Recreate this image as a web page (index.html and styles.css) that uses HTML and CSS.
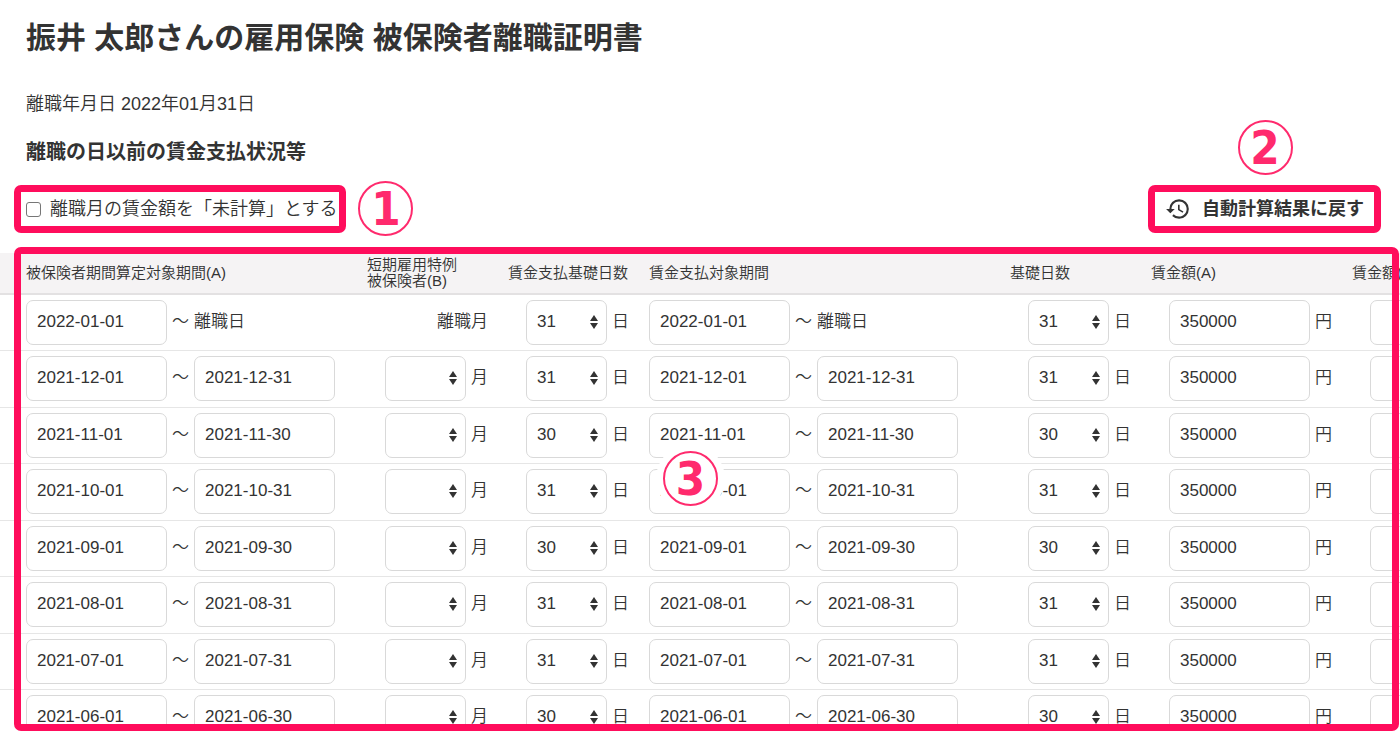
FILE: index.html
```html
<!DOCTYPE html>
<html lang="ja">
<head>
<meta charset="utf-8">
<title>被保険者離職証明書</title>
<link rel="stylesheet" href="styles.css">
</head>
<body>
<main class="page">
  <header class="intro">
    <h1 class="title">振井 太郎さんの雇用保険 被保険者離職証明書</h1>
    <p class="leave-date">離職年月日 2022年01月31日</p>
    <h2 class="subtitle">離職の日以前の賃金支払状況等</h2>
  </header>

  <div class="toolbar">
    <label class="callout uncalculated">
      <input class="checkbox" type="checkbox">
      <span>離職月の賃金額を「未計算」とする</span>
      <span class="badge badge-right">1</span>
    </label>
    <div class="callout restore">
      <button class="restore-button" type="button">
        <svg class="history" viewBox="0 0 24 24" aria-hidden="true"><path d="M13 3a9 9 0 0 0-9 9H1l3.89 3.89.07.14L9 12H6c0-3.87 3.13-7 7-7s7 3.13 7 7-3.13 7-7 7c-1.93 0-3.68-.79-4.94-2.06l-1.42 1.42A8.95 8.95 0 0 0 13 21a9 9 0 0 0 0-18zm-1 5v5l4.28 2.54.72-1.21-3.5-2.08V8z"/></svg>
        自動計算結果に戻す
      </button>
      <span class="badge badge-top">2</span>
    </div>
  </div>

  <section class="wages">
    <div class="scroller">
      <table class="wage-table">
        <colgroup>
          <col class="col-first"><col class="col-days"><col class="col-days"><col class="col-period"><col class="col-days"><col class="col-amount"><col class="col-amount">
        </colgroup>
        <thead>
          <tr>
            <th scope="col">被保険者期間算定対象期間(A)</th>
            <th scope="col">短期雇用特例<br>被保険者(B)</th>
            <th scope="col">賃金支払基礎日数</th>
            <th scope="col">賃金支払対象期間</th>
            <th scope="col">基礎日数</th>
            <th scope="col">賃金額(A)</th>
            <th scope="col">賃金額(B)</th>
          </tr>
        </thead>
        <tbody id="rows"></tbody>
      </table>
    </div>
    <div class="frame"></div>
    <span class="badge badge-table">3</span>
  </section>
</main>
<script src="rows.js"></script>
</body>
</html>
```
FILE: styles.css
```css
* {
  box-sizing: border-box;
}

body {
  margin: 0;
  background: #fff;
  color: #333;
  font-family: "Liberation Sans", "Noto Sans CJK JP", sans-serif;
  font-size: 18px;
  font-weight: 350;
}

input,
select,
button {
  margin: 0;
  color: inherit;
  font: inherit;
}

.page {
  display: flex;
  flex-direction: column;
  height: 100vh;
  overflow: hidden;
}

.intro {
  padding: 18px 26px 0;
}

.title {
  margin: 0;
  font-size: 30px;
  font-weight: 700;
  line-height: 40px;
}

.leave-date {
  margin: 34px 0 0;
  line-height: 24px;
}

.subtitle {
  margin: 22px 0 0;
  font-size: 20px;
  font-weight: 700;
  line-height: 28px;
}

.toolbar {
  display: flex;
  justify-content: space-between;
  margin: 19px 19px 20px 14px;
}

.callout {
  position: relative;
  display: flex;
  align-items: center;
  height: 48px;
  border: 7px solid #ff0d5c;
  border-radius: 7px;
}

.uncalculated {
  gap: 9px;
  padding: 0 2px 0 5px;
  line-height: 24px;
}

.checkbox {
  appearance: none;
  width: 15px;
  height: 15px;
  border: 1px solid #767676;
  border-radius: 3px;
  background: #fff;
}

.checkbox:checked {
  background: #767676;
}

.restore-button {
  display: flex;
  align-items: center;
  gap: 11px;
  padding: 0 10px;
  border: 0;
  background: none;
  font-weight: 700;
  line-height: 24px;
}

.history {
  width: 26px;
  height: 26px;
  fill: #333;
}

.badge {
  position: absolute;
  display: flex;
  align-items: center;
  justify-content: center;
  width: 55px;
  height: 55px;
  border: 2px solid #ff2a6d;
  border-radius: 50%;
  background: #fff;
  color: #ff2a6d;
  font-family: "DejaVu Sans Condensed", "DejaVu Sans", sans-serif;
  font-size: 47px;
  font-weight: 700;
  line-height: 50px;
}

.badge-right {
  top: -11px;
  right: -74px;
}

.badge-top {
  top: -72px;
  left: calc(50% - 27px);
}

.badge-table {
  top: 198px;
  left: 663px;
  box-shadow: 0 0 0 7px #fff;
}

.wages {
  position: relative;
  flex: 1;
  min-height: 0;
}

.scroller {
  height: 100%;
  overflow: hidden;
}

.frame {
  position: absolute;
  inset: -6px 1px 0 14px;
  border: 7px solid #ff0d5c;
  border-radius: 7px;
  pointer-events: none;
}

.wage-table {
  width: 1553px;
  border-collapse: separate;
  border-spacing: 0;
  table-layout: fixed;
  font-size: 17px;
}

.col-first {
  width: 367px;
}

.col-days {
  width: 141px;
}

.col-period {
  width: 361px;
}

.col-amount {
  width: 201px;
}

.wage-table th {
  height: 42px;
  padding: 0;
  border-bottom: 2px solid #e3e1e2;
  background: #f5f3f4;
  font-size: 15px;
  font-weight: 350;
  line-height: 16px;
  text-align: left;
  white-space: nowrap;
}

.wage-table td {
  padding: 5px 0;
  border-bottom: 1px solid #e6e6e6;
}

.wage-table tr:nth-child(even) td {
  padding-bottom: 6px;
}

.wage-table th:first-child,
.wage-table td:first-child {
  padding-left: 26px;
}

.fields {
  display: flex;
  align-items: center;
  gap: 5px;
  height: 45px;
  line-height: 24px;
}

.indent {
  padding-left: 18px;
}

.align-end {
  justify-content: flex-end;
  padding-right: 20px;
}

.text-input,
.select {
  height: 45px;
  border: 1px solid #d9d9d9;
  border-radius: 7px;
  background: #fff;
}

.text-input {
  width: 141px;
  padding: 0 10px 2px;
}

.unit {
  padding-bottom: 1px;
}

.select-box {
  position: relative;
  width: 81px;
}

.select {
  appearance: none;
  display: block;
  width: 100%;
  padding: 0 10px 2px;
}

.select-box::before,
.select-box::after {
  content: "";
  position: absolute;
  right: 9px;
  border: 4px solid transparent;
  pointer-events: none;
}

.select-box::before {
  top: 15px;
  border-top: 0;
  border-bottom: 6px solid #333;
}

.select-box::after {
  top: 23px;
  border-top: 6px solid #333;
  border-bottom: 0;
}
```
FILE: rows.js
```js
const periods = [
  ["2022-01-01", null, 31],
  ["2021-12-01", "2021-12-31", 31],
  ["2021-11-01", "2021-11-30", 30],
  ["2021-10-01", "2021-10-31", 31],
  ["2021-09-01", "2021-09-30", 30],
  ["2021-08-01", "2021-08-31", 31],
  ["2021-07-01", "2021-07-31", 31],
  ["2021-06-01", "2021-06-30", 30],
];

const text = (label, value) =>
  `<input class="text-input" type="text" aria-label="${label}" value="${value}">`;

const select = (label, value) =>
  `<span class="select-box"><select class="select" aria-label="${label}"><option>${value}</option></select></span>`;

const unit = (value) => `<span class="unit">${value}</span>`;

const range = (label, start, end) =>
  `<td><div class="fields">${text(label + " 開始", start)}${unit("～")}${end ? text(label + " 終了", end) : unit("離職日")}</div></td>`;

const days = (label, value) =>
  `<td><div class="fields indent">${select(label, value)}${unit("日")}</div></td>`;

const amount = (label, value) =>
  `<td><div class="fields indent">${text(label, value)}${unit("円")}</div></td>`;

document.getElementById("rows").innerHTML = periods
  .map(([start, end, count]) => `<tr>
    ${range("算定対象期間", start, end)}
    <td><div class="fields ${end ? "indent" : "align-end"}">${end ? select("短期雇用特例", "") + unit("月") : unit("離職月")}</div></td>
    ${days("賃金支払基礎日数", count)}
    ${range("賃金支払対象期間", start, end)}
    ${days("基礎日数", count)}
    ${amount("賃金額(A)", 350000)}
    ${amount("賃金額(B)", "")}
  </tr>`)
  .join("");
```
